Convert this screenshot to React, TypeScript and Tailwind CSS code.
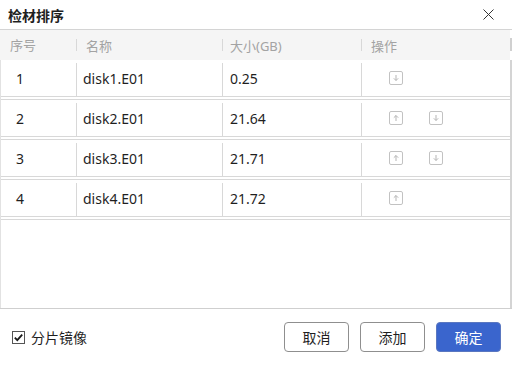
import React, { useState } from 'react';

type Disk = { id: number; name: string; size: string };

const disks: Disk[] = [
  { id: 1, name: 'disk1.E01', size: '0.25' },
  { id: 2, name: 'disk2.E01', size: '21.64' },
  { id: 3, name: 'disk3.E01', size: '21.71' },
  { id: 4, name: 'disk4.E01', size: '21.72' },
];

const ArrowBtn: React.FC<{ dir: 'up' | 'down' }> = ({ dir }) => (
  <button className="w-[14px] h-[14px] p-0 block">
    <svg width="14" height="14" viewBox="0 0 14 14">
      <rect x="0.5" y="0.5" width="13" height="13" rx="1.5" fill="#fff" stroke="#c2c2c2" />
      {dir === 'up' ? (
        <g stroke="#b5b5b5" strokeWidth="1" fill="none">
          <path d="M7 4.5 V10" />
          <path d="M4.8 6.7 L7 4.5 L9.2 6.7" />
        </g>
      ) : (
        <g stroke="#b5b5b5" strokeWidth="1" fill="none">
          <path d="M7 4 V9.5" />
          <path d="M4.8 7.3 L7 9.5 L9.2 7.3" />
        </g>
      )}
    </svg>
  </button>
);

const App: React.FC = () => {
  const [split, setSplit] = useState<boolean>(true);

  return (
    <div
      className="w-[512px] h-[365px] bg-white flex flex-col text-[#1f1f1f] overflow-hidden"
      style={{ fontFamily: '"Noto Sans", "Noto Sans CJK SC", sans-serif' }}
    >
      {/* Title */}
      <div className="h-[30px] shrink-0 flex items-center justify-between border-b border-[#d4d4d4] pl-[8px] pr-[18px]">
        <span className="text-[14px] font-bold leading-none" style={{ fontFamily: '"Noto Sans CJK SC", sans-serif' }}>
          检材排序
        </span>
        <svg width="11" height="11" viewBox="0 0 11 11">
          <path d="M0.5 0.5 L10.5 10.5 M10.5 0.5 L0.5 10.5" stroke="#333" strokeWidth="1" />
        </svg>
      </div>

      {/* Header */}
      <div className="h-[30px] shrink-0 flex items-center bg-[#f5f5f5] text-[13px] text-[#a3a3a3] mr-[2px] relative">
        <div className="w-[76px] pl-[10px] pt-[2px]">序号</div>
        <div className="w-[146px] border-l border-[#d8d8d8] h-[12px] flex items-center">
          <span className="pl-[9px] pt-[3px]">名称</span>
        </div>
        <div className="w-[139px] border-l border-[#d8d8d8] h-[12px] flex items-center">
          <span className="pl-[7px] pt-[3px]">大小(GB)</span>
        </div>
        <div className="flex-1 border-l border-[#d8d8d8] h-[12px] flex items-center">
          <span className="pl-[9px] pt-[3px]">操作</span>
        </div>
        <div className="absolute right-[-2px] top-[8px] w-[2px] h-[13px] bg-[#d0d0d0]" />
      </div>

      {/* Body */}
      <div className="h-[248px] shrink-0 flex flex-col border-r-2 border-l border-[#e2e2e2] border-r-[#d4d4d4]">
        {disks.map((d, i) => (
          <div
            key={d.id}
            className={`flex text-[14px] border-b border-[#d8d8d8] mb-[2px] ${i === 0 ? 'h-[37px]' : 'h-[38px] border-t'}`}
          >
            <div className="w-[75px] pl-[15px] flex items-center">{d.id}</div>
            <div className="w-[146px] mt-[3px] border-l border-[#d8d8d8] pl-[6px] flex items-center pb-[3px]">{d.name}</div>
            <div className="w-[139px] mt-[3px] border-l border-[#d8d8d8] pl-[7px] flex items-center pb-[3px]">{d.size}</div>
            <div className="flex-1 mt-[3px] border-l border-[#d8d8d8] pl-[27px] flex items-center gap-[26px] pb-[3px]">
              {i > 0 && <ArrowBtn dir="up" />}
              {i < disks.length - 1 && <ArrowBtn dir="down" />}
            </div>
          </div>
        ))}
        <div className="flex-1 border-t border-[#d8d8d8]" />
      </div>

      {/* Footer */}
      <div className="flex-1 border-t border-[#cfcfcf] flex items-center justify-between pl-[12px] pr-[11px]">
        <label className="flex items-center gap-[6px] text-[14px] cursor-pointer" onClick={() => setSplit(!split)}>
          <svg width="13" height="13" viewBox="0 0 13 13">
            <rect x="0.5" y="0.5" width="12" height="12" fill="#fff" stroke="#555" />
            {split && <path d="M2.8 6.6 L5.3 9.2 L10.2 3.6" stroke="#1a1a1a" strokeWidth="1.8" fill="none" />}
          </svg>
          <span style={{ fontFamily: '"Noto Sans CJK SC", sans-serif' }}>分片镜像</span>
        </label>
        <div className="flex gap-[11px] text-[14px]" style={{ fontFamily: '"Noto Sans CJK SC", sans-serif' }}>
          <button className="w-[65px] h-[30px] rounded-[4px] border border-[#8f8f8f] bg-white text-[#1f1f1f]">取消</button>
          <button className="w-[65px] h-[30px] rounded-[4px] border border-[#8f8f8f] bg-white text-[#1f1f1f]">添加</button>
          <button className="w-[65px] h-[30px] rounded-[4px] border border-[#5a77c0] bg-[#3a65cd] text-white">确定</button>
        </div>
      </div>
    </div>
  );
};

export default App;
